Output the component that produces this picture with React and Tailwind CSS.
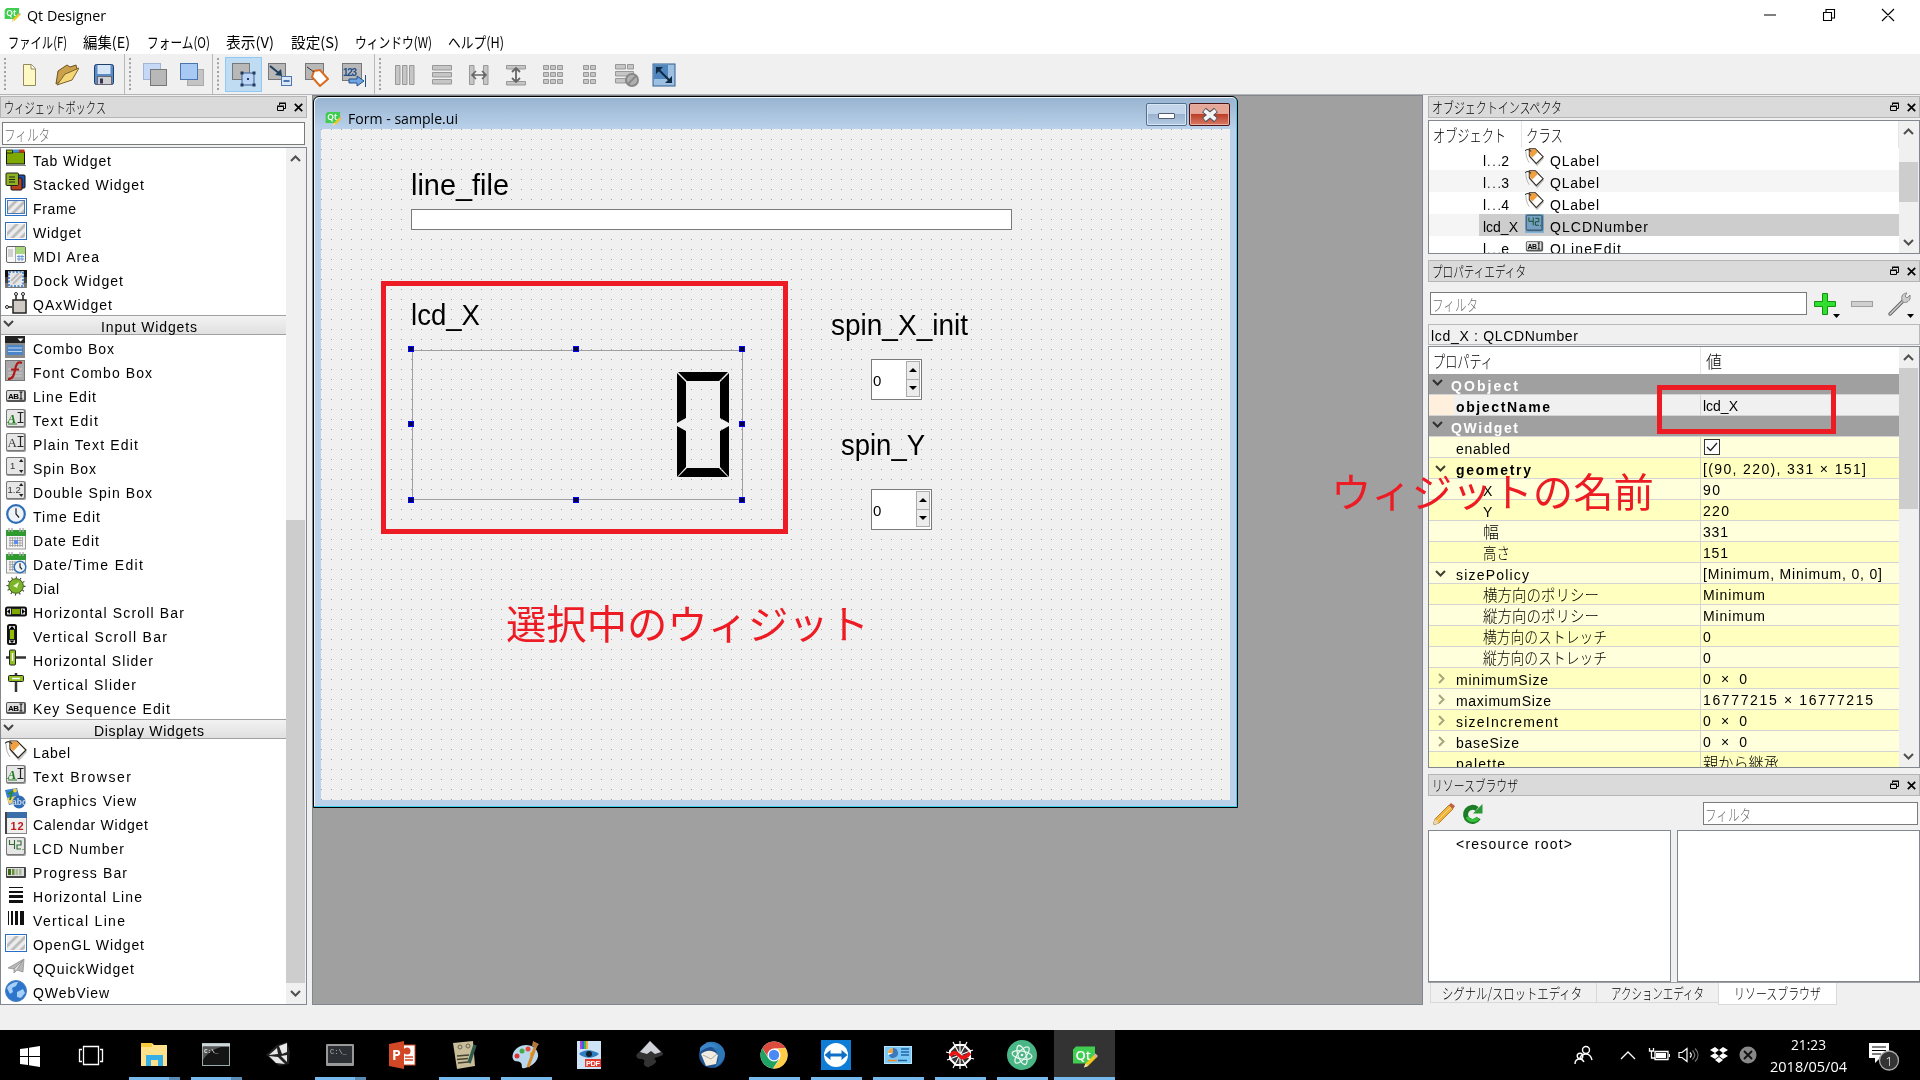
import React, { useLayoutEffect, useRef, useState } from "react";

const UI = "font-['Noto_Sans_CJK_JP',sans-serif]";

/* Text set to an exact advance width: by tracking, or by condensing the glyphs. */
function T({ w, squeeze, className = "", children }) {
  const ref = useRef(null);
  const [style, setStyle] = useState({});
  useLayoutEffect(() => {
    const natural = ref.current.getBoundingClientRect().width;
    if (!natural) return;
    setStyle(
      squeeze
        ? { transform: `scaleX(${w / natural})` }
        : { letterSpacing: `${(w - natural) / Math.max(1, String(children).length - 1)}px` }
    );
  }, []);
  return (
    <span
      className={
        "inline-block shrink-0 whitespace-pre " +
        (squeeze ? "" : "font-['Liberation_Sans','Noto_Sans_CJK_JP',sans-serif] ") +
        className
      }
      style={{ width: w }}
    >
      <span ref={ref} className="inline-block origin-left whitespace-pre" style={style}>
        {children}
      </span>
    </span>
  );
}

/* ---------- logos and shared glyphs ---------- */

const QtLogo = ({ className }) => (
  <svg viewBox="0 0 26 22" className={className}>
    <path d="M4 1h19v12l-5 5H1V4z" fill="#41cd52" />
    <text x="3.500" y="14" fontSize="13" fontWeight="600" fill="#fff" fontFamily="Open Sans, sans-serif">Qt</text>
    <path d="M12 22l1.500-4 9-9 2.500 2.500-9 9z" fill="#f2c91d" />
    <path d="M21.500 10l2-2 2.500 2.500-2 2z" fill="#dcaaa0" />
    <path d="M12 22l1.500-4 2.500 2.500z" fill="#eee1c0" />
  </svg>
);

const FloatIcon = () => (
  <svg viewBox="0 0 9 10" className="h-[10px] w-[9px]" fill="none" stroke="#000">
    <path d="M2.500 3V1.500h6v5H7M2 1h7" />
    <path d="M.5 4.500h6v4h-6zM0 4h7" />
  </svg>
);
const XIcon = () => (
  <svg viewBox="0 0 9 9" className="h-[9px] w-[9px]" stroke="#000" strokeWidth="1.700">
    <path d="M.8 .8l7.400 7.400M8.200 .8L.8 8.200" />
  </svg>
);
const Chevron = ({ dir = "down", color = "#505050", className = "h-[7px] w-[11px]" }) => (
  <svg viewBox="0 0 11 7" className={className} fill="none" stroke={color} strokeWidth="2">
    <path d={dir === "down" ? "M1 1l4.500 4.500L10 1" : "M1 6l4.500-4.500L10 6"} />
  </svg>
);
const RightChevron = () => (
  <svg viewBox="0 0 7 11" className="ml-[-3px] h-[11px] w-[7px]" fill="none" stroke="#a6a67c" strokeWidth="2">
    <path d="M1 1l4.500 4.500L1 10" />
  </svg>
);

/* ---------- widget box icons (22 x 22) ---------- */

const hatch = (
  <>
    <rect x=".5" y="2.500" width="21" height="17" fill="#fff" stroke="#2b6fc4" />
    <rect x="2" y="4" width="18" height="14" fill="#ececec" />
    <path d="M2 12l8-8h4L2 16zM5 18L19 4h1v3L9 18zM14 18l6-6v4l-2 2z" fill="#bdbdbd" />
  </>
);
const key = (
  <>
    <rect x="1" y="1" width="20" height="19" rx="2" fill="#999" />
    <rect x="1.500" y="1.500" width="18" height="17" rx="1.500" fill="#e6e6e6" stroke="#777" />
  </>
);
const abi = (
  <>
    <rect x="1" y="6" width="20" height="12" rx="2" fill="#555" />
    <rect x="2" y="7" width="17" height="9" rx="1" fill="#ddd" />
    <text x="3" y="14.500" fontSize="8" fontWeight="bold" fontFamily="Liberation Sans, sans-serif" textLength="11">AB</text>
    <path d="M14.500 8h3M14.500 15h3M16 8v7" stroke="#000" fill="none" />
  </>
);
const cal = (
  <>
    <rect x="1.500" y="4" width="19" height="17" fill="#f4f4f4" stroke="#999" />
    <rect x="1" y="2" width="20" height="6" fill="#2f9a2f" />
    <path d="M4 0v4M7 0v4M15 0v4M18 0v4" stroke="#aaa" strokeWidth="1.400" />
    <path d="M4 10h14M4 12.500h14M4 15h14M4 17.500h14M5 9v10M7.500 9v10M10 9v10M12.500 9v10M15 9v10M17.500 9v10" stroke="#999" strokeWidth=".8" />
  </>
);
const tag = (
  <>
    <path d="M7 3h7l8 9-8 9-9-10z" fill="#555" opacity=".35" />
    <path d="M5 1h7l9 9-8 8-8-9z" fill="#fff" stroke="#2b2117" strokeWidth="1.200" />
    <path d="M5.500 1.500h6.300l3 3-6.300 6.500-3-3z" fill="#f0a040" />
    <path d="M0 3.500C2 1 5 1 7 4" stroke="#333" fill="none" strokeWidth="1.200" />
    <path d="M1 4c0 6 2 10 4 13" stroke="#999" fill="none" strokeWidth=".8" />
  </>
);
const lcd = (
  <>
    {key}
    <path d="M4.500 4v4.500h5M9.500 4v9M12 5h4v4h-4v4h4M18 13v1" stroke="#2c6b2c" fill="none" strokeWidth="1.100" />
  </>
);
const AI = ({ green }) => (
  <>
    {key}
    <text x="2.500" y="14.500" fontSize="13" fontStyle={green ? "italic" : "normal"} fill={green ? "#1f7a1f" : "#333"} fontWeight={green ? "bold" : "normal"} fontFamily="Liberation Serif, serif">A</text>
    <path d="M12.500 4.500h6M12.500 14.500h6M15.500 4.500v10" stroke="#222" strokeWidth="1.200" />
    {green && <path d="M3 16h9" stroke="#1f7a1f" />}
  </>
);
const clock = (cx, cy, r) => (
  <>
    <circle cx={cx} cy={cy} r={r} fill="#eef3f8" stroke="#2f6fb8" strokeWidth={r / 4} />
    <path d={`M${cx} ${cy - r * 0.65}V${cy}L${cx + r * 0.35} ${cy + r * 0.4}`} stroke="#222" fill="none" strokeWidth="1.200" />
  </>
);
const spin = (s) => (
  <>
    {key}
    <text x={s.length > 1 ? 2.500 : 5} y="13" fontSize="9.500" fill="#333" fontFamily="Liberation Sans, sans-serif">{s}</text>
    <path d="M14 6l2.200-3 2.200 3zM14 14l2.200 3 2.200-3z" fill="#222" />
  </>
);

const ICONS = {
  tab: (
    <>
      <rect x="1.500" y="4" width="18" height="12" fill="#7fa800" stroke="#111" />
      <rect x="1.500" y="2" width="6" height="3" fill="#8fbf00" stroke="#111" strokeWidth=".8" />
      <rect x="8" y="1.500" width="6" height="3" fill="#3c8fd8" />
      <rect x="14" y="1.500" width="5.500" height="3" fill="#c03018" />
      <path d="M1 17.500h20" stroke="#888" />
    </>
  ),
  stacked: (
    <>
      <rect x="10" y="3" width="10" height="13" rx="1" fill="#1a50b0" stroke="#111" />
      <rect x="6" y="6" width="11" height="12" rx="1" fill="#b8401c" stroke="#111" />
      <rect x="1" y="1" width="12.500" height="12.500" rx="1" fill="#8fb320" stroke="#222" />
      <path d="M4 5h6M4 7.500h6M4 10h6" stroke="#222" />
    </>
  ),
  frame: (
    <>
      {hatch}
      <rect x="2.500" y="4.500" width="17" height="13" fill="none" stroke="#4a7ab8" />
    </>
  ),
  widget: hatch,
  mdi: (
    <>
      <rect x="1.500" y="2.500" width="19" height="16" rx="1.500" fill="#f6f6f6" stroke="#666" />
      <rect x="11" y="3" width="9" height="7" fill="#a9d77e" />
      <path d="M10.500 3v15M3 6h5M3 8h5M3 10h5M3 12h5" stroke="#aaa" />
      <path d="M12 12.500h7M12 15h7M14 11v6M17 11v6" stroke="#6b9bd8" />
    </>
  ),
  dock: (
    <>
      <rect x="0" y="2" width="22" height="18" fill="#111" />
      <rect x="0" y="9" width="22" height="6" fill="#444" />
      <rect x="0" y="15" width="22" height="5" fill="#777" />
      <rect x="4" y="4" width="14" height="14" fill="#e6e6e6" stroke="#fff" strokeWidth="1.500" />
      <rect x="4" y="4" width="14" height="14" fill="none" stroke="#2b6fc4" strokeWidth="1.500" strokeDasharray="2 1.500" />
      <path d="M6 13l8-8M8 16l9-9" stroke="#bbb" strokeWidth="2" />
    </>
  ),
  ax: (
    <>
      <rect x="8" y="8" width="13" height="13" fill="#cfcbc4" stroke="#222" strokeWidth="1.500" />
      <path d="M11 8V3M18 8V3M7 15H3" stroke="#222" strokeWidth="1.500" />
      <circle cx="11" cy="2" r="1.500" fill="#fff" stroke="#222" />
      <circle cx="18" cy="2" r="1.500" fill="#fff" stroke="#222" />
      <circle cx="2" cy="15" r="1.500" fill="#fff" stroke="#222" />
    </>
  ),
  combo: (
    <>
      <rect x="0" y="0" width="20" height="22" fill="#8a8a8a" />
      <rect x="0" y="0" width="20" height="7" fill="#222" />
      <path d="M12.500 2.500h6l-3 3z" fill="#fff" />
      <rect x="2" y="9" width="16" height="10" fill="#4d86c8" />
      <path d="M3 12h14M3 15.500h14" stroke="#b9d4f0" />
    </>
  ),
  font: (
    <>
      <rect x=".5" y=".5" width="19" height="20" fill="#a8a8a8" stroke="#777" />
      <path d="M3 9h14M3 13h14M3 16h14" stroke="#ccc" />
      <path d="M17 3c-5-2-6 2-7 7s-2 9-7 9M6 9.500h8" stroke="#b01818" strokeWidth="2.200" fill="none" />
    </>
  ),
  line: abi,
  text: <AI green />,
  plain: <AI />,
  spin: spin("1"),
  dspin: spin("1.2"),
  time: clock(11, 10, 8.800),
  date: (
    <>
      {cal}
      <rect x="9" y="12" width="4" height="4" fill="#5b8def" />
    </>
  ),
  datetime: (
    <>
      {cal}
      {clock(15, 15, 5.800)}
    </>
  ),
  dial: (
    <>
      <circle cx="11" cy="10" r="8.500" fill="none" stroke="#333" strokeWidth="2" strokeDasharray="1 3.400" />
      <circle cx="11" cy="10" r="7.300" fill="#7db52a" stroke="#3c5c10" />
      <path d="M8 10l6-4-2 6-1.500-1z" fill="#eef6dc" />
    </>
  ),
  hscroll: (
    <>
      <rect x="1" y="7.500" width="20" height="8" rx="1.500" fill="#ddd" stroke="#111" strokeWidth="2" />
      <rect x="6.500" y="8.500" width="9" height="6" fill="#7da800" stroke="#222" />
      <path d="M5 9v5l-3-2.500zM17 9v5l3-2.500z" fill="#000" />
    </>
  ),
  vscroll: (
    <>
      <rect x="3" y="1" width="8" height="19" rx="1.500" fill="#ddd" stroke="#111" strokeWidth="2" />
      <rect x="4.500" y="5.500" width="5" height="10" fill="#8fbf00" stroke="#222" />
      <path d="M4.500 5L7 2l2.500 3zM4.500 16.500L7 19l2.500-2.500z" fill="#000" />
    </>
  ),
  hslider: (
    <>
      <path d="M1 9.500h20" stroke="#333" strokeWidth="2.500" />
      <rect x="4.500" y="2" width="6" height="15" rx="1" fill="#8fbf20" stroke="#222" />
      <path d="M7.500 5v8" stroke="#fff" strokeWidth="1.500" />
    </>
  ),
  vslider: (
    <>
      <path d="M11 1v19" stroke="#333" strokeWidth="2.500" />
      <rect x="3.500" y="3.500" width="15" height="6" rx="1" fill="#8fbf20" stroke="#222" />
      <path d="M7 6.500h8" stroke="#fff" strokeWidth="1.500" />
    </>
  ),
  label: tag,
  graphics: (
    <>
      <path d="M0 2l12-2 4 14-12 3z" fill="#3b7fd0" />
      <path d="M2 10l9-2 2 6-9 2z" fill="#f0d070" />
      <path d="M5 12l2-8 3-1M7 4L3 6" stroke="#2a8a2a" strokeWidth="1.800" fill="none" />
      <circle cx="10" cy="2.500" r="2" fill="#f4d030" />
      <circle cx="14" cy="14" r="6.500" fill="#2d6cb5" />
      <text x="7" y="17" fontSize="8.500" fontWeight="bold" fill="#c8d6e6" fontFamily="Liberation Sans, sans-serif">abc</text>
    </>
  ),
  calendar: (
    <>
      <rect x=".5" y=".5" width="21" height="21" fill="#eee" stroke="#888" />
      <path d="M0 0h22v6H0z" fill="#3a6ea8" />
      <path d="M1 0v22" stroke="#444" strokeWidth="2" />
      <text x="5.500" y="18" fontSize="11" fontWeight="bold" fill="#c01818" fontFamily="Liberation Sans, sans-serif" textLength="13">12</text>
    </>
  ),
  lcd,
  progress: (
    <>
      <rect x="1" y="7" width="20" height="11" rx="1" fill="#444" />
      <rect x="2" y="8" width="17" height="8" fill="#ddd" />
      <path d="M3 9h3v6H3z" fill="#3c6c10" />
      <path d="M7 9h2.500v6H7z" fill="#6a8c40" />
      <path d="M10.500 9H13v6h-2.500zM14 9h2.500v6H14z" fill="#a8b898" />
    </>
  ),
  hline: <path d="M4 3h14v1H4zM4 7h14v2H4zM4 11h14v3H4zM4 16h14v3H4z" fill="#111" />,
  vline: <path d="M3 3h1v14H3zM6 3h2v14H6zM10 3h3v14h-3zM15 3h4v14h-4z" fill="#111" />,
  quick: (
    <>
      <path d="M3 12L19 3l-1 13-6-2-3 3v-4z" fill="#b8b8b8" stroke="#888" strokeWidth=".7" />
      <path d="M9 13l9-9-6 10" fill="#ddd" stroke="#888" strokeWidth=".7" />
    </>
  ),
  web: (
    <>
      <circle cx="11" cy="11" r="10.500" fill="#2d74cc" stroke="#4c80bc" />
      <path d="M2 8c3-5 8-6 11-6l-2 4-4 2 1 4-3 2zM12 12l6-3 2 4-4 5-4-1z" fill="#a6d0f7" />
    </>
  ),
};

const GROUPS = [
  {
    items: [
      ["tab", "Tab Widget", 78],
      ["stacked", "Stacked Widget", 111],
      ["frame", "Frame", 43],
      ["widget", "Widget", 48],
      ["mdi", "MDI Area", 66],
      ["dock", "Dock Widget", 90],
      ["ax", "QAxWidget", 79],
    ],
  },
  {
    title: ["Input Widgets", 96],
    items: [
      ["combo", "Combo Box", 81],
      ["font", "Font Combo Box", 119],
      ["line", "Line Edit", 63],
      ["text", "Text Edit", 65],
      ["plain", "Plain Text Edit", 105],
      ["spin", "Spin Box", 63],
      ["dspin", "Double Spin Box", 119],
      ["time", "Time Edit", 67],
      ["date", "Date Edit", 66],
      ["datetime", "Date/Time Edit", 110],
      ["dial", "Dial", 26],
      ["hscroll", "Horizontal Scroll Bar", 151],
      ["vscroll", "Vertical Scroll Bar", 134],
      ["hslider", "Horizontal Slider", 120],
      ["vslider", "Vertical Slider", 103],
      ["line", "Key Sequence Edit", 137],
    ],
  },
  {
    title: ["Display Widgets", 110],
    items: [
      ["label", "Label", 37],
      ["text", "Text Browser", 98],
      ["graphics", "Graphics View", 103],
      ["calendar", "Calendar Widget", 115],
      ["lcd", "LCD Number", 91],
      ["progress", "Progress Bar", 94],
      ["hline", "Horizontal Line", 109],
      ["vline", "Vertical Line", 92],
      ["widget", "OpenGL Widget", 111],
      ["quick", "QQuickWidget", 101],
      ["web", "QWebView", 76],
    ],
  },
];

function DockTitle({ text, w }) {
  return (
    <div className="flex h-[22px] shrink-0 items-center border border-[#b4b4b4] bg-[#dadada] pl-[3px] pr-[3px]">
      <T w={w} squeeze className="text-[15px] leading-[20px]">{text}</T>
      <div className="ml-auto flex items-center gap-[8px]">
        <FloatIcon />
        <XIcon />
      </div>
    </div>
  );
}

function Filter({ className }) {
  return (
    <div className={"flex h-[23px] items-center border border-[#7a7a7a] bg-white pl-px text-[#707070] " + className}>
      <T w={46} squeeze className="text-[16px] leading-[20px]">フィルタ</T>
    </div>
  );
}

function ScrollBar({ before, thumb, className = "w-[20px]" }) {
  return (
    <div className={"flex shrink-0 flex-col items-center bg-[#f0f0f0] pr-px " + className}>
      <div className="flex h-[21px] shrink-0 items-center"><Chevron dir="up" /></div>
      <div className="w-full shrink-0" style={{ height: before }} />
      <div className="w-full shrink-0 bg-[#cdcdcd]" style={{ height: thumb }} />
      <div className="mt-auto flex h-[21px] shrink-0 items-center"><Chevron /></div>
    </div>
  );
}

/* ---------- toolbar ---------- */

const Sep = () => <div className="h-[40px] w-px shrink-0 bg-[#b8b8b8]" />;
const Grip = ({ className = "" }) => (
  <svg viewBox="0 0 2 32" className={"h-[32px] w-[2px] shrink-0 " + className}>
    <path d="M1 0v32" stroke="#a0a0a0" strokeWidth="2" strokeDasharray="2 2.300" />
  </svg>
);
const TI = ({ className, children }) => (
  <svg viewBox="0 0 24 24" className={"mt-[2px] h-[24px] w-[24px] shrink-0 " + className}>{children}</svg>
);
const gray = { fill: "#c6c6c6", stroke: "#989898" };

function ToolBar() {
  return (
    <div className="flex h-[40px] items-center bg-[#f0f0f0]">
      <Grip className="ml-[4px]" />
      <TI className="ml-[12px]">
        <path d="M5.500 1.500h8l4 4v17h-12z" fill="#fdf8c4" stroke="#93895a" />
        <path d="M13 1.500v4.500h4.500" fill="#fff" stroke="#93895a" />
      </TI>
      <TI className="ml-[13px]">
        <path d="M1 21L3 8l9-6 3 2 6-2 1 4-6 5z" fill="#caa14a" stroke="#6b5222" />
        <path d="M2 22L10 11l5-2 9-4-7 12z" fill="#f4d778" stroke="#7d6128" />
      </TI>
      <TI className="ml-[14px]">
        <rect x="1.500" y="1.500" width="19" height="20" rx="2" fill="#5b8bc4" stroke="#20406c" />
        <rect x="4.500" y="2" width="13" height="9" fill="#d6e6f7" />
        <rect x="4.500" y="13.500" width="14" height="8" fill="#d0d0d0" stroke="#667" />
        <rect x="7" y="15.500" width="3" height="5" fill="#335" />
      </TI>
      <div className="ml-[7px]"><Sep /></div>
      <Grip className="ml-[4px]" />
      <TI className="ml-[12px]">
        <rect x=".5" y=".5" width="17" height="16" fill="#c5d8f5" stroke="#a3b5d4" />
        <rect x="7.500" y="6.500" width="16" height="16" fill="#b8b8b8" stroke="#777" />
      </TI>
      <TI className="ml-[13px]">
        <rect x="7.500" y="6.500" width="16" height="16" fill="#c4c4c4" stroke="#aaa" />
        <rect x=".5" y=".5" width="17" height="16" fill="#a9c9f5" stroke="#4a75ae" />
      </TI>
      <div className="ml-[8px]"><Sep /></div>
      <Grip className="ml-[4px]" />
      <div className="ml-[6px] flex h-[35px] w-[37px] items-center justify-center border border-[#90c8f6] bg-[#c0dcf3]">
        <TI className="">
          <rect x=".5" y=".5" width="17" height="16" fill="#b8b8b8" stroke="#777" />
          <rect x="10" y="10" width="12" height="12" fill="#bcd5f6" stroke="#385f90" />
          <path d="M8.500 8.500h3v3h-3zM20.500 8.500h3v3h-3zM8.500 20.500h3v3h-3zM20.500 20.500h3v3h-3zM15 15h2v2h-2z" fill="#203a5c" />
        </TI>
      </div>
      <TI className="ml-[6px]">
        <rect x=".5" y=".5" width="17" height="16" fill="#b8b8b8" stroke="#777" />
        <rect x="13.500" y="13.500" width="10" height="9" fill="#dbe8fa" stroke="#4a75ae" />
        <path d="M15.500 18h6" stroke="#4a75ae" strokeWidth="2" />
        <path d="M2 3l10 8" stroke="#1f3f5f" strokeWidth="2" />
        <path d="M14 13l-7-1 6-6z" fill="#1f3f5f" />
      </TI>
      <TI className="ml-[13px]">
        <rect x=".5" y=".5" width="18" height="16" fill="#b8b8b8" stroke="#777" />
        <path d="M9 8l6-1 8 9-8 7-8-9z" fill="#fff" stroke="#d96a1e" strokeWidth="2" />
        <path d="M2 4l7 5" stroke="#333" />
      </TI>
      <TI className="ml-[13px]">
        <rect x=".5" y=".5" width="19" height="17" fill="#b8b8b8" stroke="#777" />
        <text x="1" y="13" fontSize="10" fontWeight="bold" fill="#24508a" fontFamily="Liberation Sans, sans-serif" textLength="14">123</text>
        <path d="M7 16h8v-3l7 5-7 5v-3H7z" fill="#6fa4e4" stroke="#24508a" />
        <path d="M23.500 12v12" stroke="#24508a" />
      </TI>
      <div className="ml-[8px]"><Sep /></div>
      <Grip className="ml-[4px]" />
      <TI className="ml-[12px]">
        <path d="M2.500 2.500h4.500v19H2.500zM9.500 2.500H14v19H9.500zM16.500 2.500H21v19h-4.500z" {...gray} />
      </TI>
      <TI className="ml-[13px]">
        <path d="M2.500 2.500h19V7h-19zM2.500 9.500h19V14h-19zM2.500 16.500h19V21h-19z" {...gray} />
      </TI>
      <TI className="ml-[13px]">
        <path d="M2.500 2.500h4.500v19H2.500zM16.500 2.500H21v19h-4.500z" {...gray} />
        <path d="M5 12h14M9 8l-4 4 4 4M15 8l4 4-4 4" stroke="#666" strokeWidth="1.600" fill="none" />
      </TI>
      <TI className="ml-[13px]">
        <path d="M2.500 2.500h19V6h-19zM2.500 18.500h19V22h-19z" {...gray} />
        <path d="M12 5v14M8 9l4-4 4 4M8 15l4 4 4-4" stroke="#666" strokeWidth="1.800" fill="none" />
      </TI>
      <TI className="ml-[13px]">
        <path d="M2.500 2.500h5v4h-5zM9.500 2.500h5v4h-5zM16.500 2.500h5v4h-5zM2.500 9.500h5v4h-5zM9.500 9.500h5v4h-5zM16.500 9.500h5v4h-5zM2.500 16.500h5v4h-5zM9.500 16.500h5v4h-5zM16.500 16.500h5v4h-5z" {...gray} />
      </TI>
      <TI className="ml-[13px]">
        <path d="M5.500 2.500h5v4h-5zM12.500 2.500h5v4h-5zM5.500 9.500h5v4h-5zM12.500 9.500h5v4h-5zM5.500 16.500h5v4h-5zM12.500 16.500h5v4h-5z" {...gray} />
      </TI>
      <TI className="ml-[13px]">
        <path d="M.5 1.500h10V6H.5zM12.500 1.500h6V6h-6zM.5 8.500h18V13H.5zM.5 15.500h10V20H.5z" {...gray} />
        <circle cx="17" cy="17" r="6" fill="#b0b0b0" stroke="#888" strokeWidth="2" />
        <path d="M13 21l8-8" stroke="#888" strokeWidth="2" />
      </TI>
      <TI className="ml-[13px]">
        <rect x="1" y="1" width="22" height="22" fill="#9dbfe2" stroke="#2f5f90" />
        <path d="M2 2h14v14H2z" fill="#4f86bd" />
        <path d="M6 6l12 12" stroke="#0e2a45" strokeWidth="2" />
        <path d="M4 4h7l-7 7zM20 20h-7l7-7z" fill="#0e2a45" />
      </TI>
    </div>
  );
}

/* ---------- form being edited ---------- */

function Spin({ className, w }) {
  return (
    <div className={"absolute flex h-[41px] border border-[#7a7a7a] bg-white " + className} style={{ width: w }}>
      <span className="mt-[11px] ml-[1px] font-['Liberation_Sans',sans-serif] text-[15px] leading-[20px]">0</span>
      <div className="ml-auto mr-px mt-px flex h-[36px] w-[14px] flex-col border border-[#ababab] bg-[#ececec]">
        <div className="flex flex-1 items-center justify-center border-b border-[#ababab]">
          <svg viewBox="0 0 8 4" className="h-[4px] w-[8px]"><path d="M0 4l4-4 4 4z" /></svg>
        </div>
        <div className="flex flex-1 items-center justify-center">
          <svg viewBox="0 0 8 4" className="h-[4px] w-[8px]"><path d="M0 0l4 4 4-4z" /></svg>
        </div>
      </div>
    </div>
  );
}

const Handle = ({ className }) => <div className={"absolute h-[6px] w-[6px] border border-[#0000ff] bg-[#000040] " + className} />;

function FormWindow() {
  return (
    <div className="flex h-[712px] w-[925px] flex-col rounded-t-[6px] border border-black bg-[#b9d1ea] shadow-[inset_-1px_-1px_0_#3fd0f0,inset_1px_1px_0_#eef5fc]">
      <div className="mx-px mt-px flex h-[31px] shrink-0 items-start rounded-t-[5px] bg-gradient-to-b from-[#99b4d1] to-[#b9d1ea] pl-[10px] pr-[6px]">
        <QtLogo className="mt-[13px] h-[15px] w-[17px]" />
        <T w={110} squeeze className="ml-[6px] mt-[10px] font-['Open_Sans',sans-serif] text-[15px] font-normal leading-[20px]">Form - sample.ui</T>
        <div className="ml-auto mt-[5px] flex h-[23px] w-[41px] items-center justify-center rounded-[2px] border border-[#56708f] bg-gradient-to-b from-[#c3d5ea] from-45% via-[#9ab3d0] via-50% to-[#b5cbe4] shadow-[inset_0_0_0_1px_#d9e6f4]">
          <div className="mt-[3px] h-[6px] w-[17px] rounded-[1px] border border-[#555b70] bg-white" />
        </div>
        <div className="ml-[2px] mt-[5px] flex h-[23px] w-[41px] items-center justify-center rounded-[2px] border border-[#4b1414] bg-gradient-to-b from-[#e5a898] from-45% via-[#bb3f28] via-50% to-[#d77a64] shadow-[inset_0_0_0_1px_#e8b0a4]">
          <svg viewBox="0 0 18 16" className="h-[16px] w-[18px]">
            <path d="M3 3l12 10M15 3L3 13" stroke="#50505c" strokeWidth="6" />
            <path d="M3.500 3.500l11 9M14.500 3.500l-11 9" stroke="#f4f4f4" strokeWidth="3.800" />
          </svg>
        </div>
      </div>
      <div className="relative ml-[7px] mr-[7px] h-[671px] bg-[#f0f0f0] bg-[radial-gradient(circle_at_0.5px_0.5px,#a0a0a0_0.7px,transparent_0.8px)] bg-[length:10px_10px] font-['Liberation_Sans',sans-serif] font-normal">
        <T w={98} squeeze className="absolute left-[90px] top-[36px] text-[30px] leading-[40px]">line_file</T>
        <div className="absolute left-[90px] top-[80px] h-[21px] w-[601px] border border-[#7a7a7a] bg-white" />
        <T w={69} squeeze className="absolute left-[90px] top-[166px] text-[30px] leading-[40px]">lcd_X</T>
        <T w={137} squeeze className="absolute left-[510px] top-[176px] text-[30px] leading-[40px]">spin_X_init</T>
        <T w={84} squeeze className="absolute left-[520px] top-[296px] text-[30px] leading-[40px]">spin_Y</T>
        <Spin className="left-[550px] top-[230px]" w={51} />
        <Spin className="left-[550px] top-[360px]" w={61} />
        <div className="absolute left-[91px] top-[221px] h-[150px] w-[331px] border border-[#a0a0a0]" />
        <svg viewBox="0 0 54 108" className="absolute left-[355px] top-[242px] h-[108px] w-[54px]">
          <path d="M2 1h50l-9 9H11zM1 2l9 9v36l-9 5zM53 2l-9 9v36l9 5zM1 55l9 5v36l-9 10zM53 55l-9 5v36l9 10zM2 106l9-9h32l9 9z" fill="#000" />
        </svg>
        <Handle className="left-[87px] top-[217px]" />
        <Handle className="left-[252px] top-[217px]" />
        <Handle className="left-[418px] top-[217px]" />
        <Handle className="left-[87px] top-[292px]" />
        <Handle className="left-[418px] top-[292px]" />
        <Handle className="left-[87px] top-[368px]" />
        <Handle className="left-[252px] top-[368px]" />
        <Handle className="left-[418px] top-[368px]" />
      </div>
    </div>
  );
}

/* ---------- right column ---------- */

const OBJECTS = [
  ["l⋯2", 26, tag, "QLabel", 49, "bg-white"],
  ["l⋯3", 26, tag, "QLabel", 49, "bg-[#f5f5f5]"],
  ["l⋯4", 26, tag, "QLabel", 49, "bg-white"],
  ["lcd_X", 35, lcd, "QLCDNumber", 98, "bg-[#cdcdcd]"],
  ["l⋯e", 26, abi, "QLineEdit", 71, "bg-white"],
];

const A = "bg-[#ffffdc]";
const B = "bg-[#ffffbf]";
const PROPS = [
  ["", 1, "enabled", 54, "check", 0, A],
  ["down", 1, "geometry", 75, "[(90, 220), 331 × 151]", 163, B],
  ["", 2, "X", 9, "90", 17, A],
  ["", 2, "Y", 9, "220", 26, B],
  ["", 2, "幅", 16, "331", 25, A],
  ["", 2, "高さ", 27, "151", 25, B],
  ["down", 1, "sizePolicy", 73, "[Minimum, Minimum, 0, 0]", 179, A],
  ["", 2, "横方向のポリシー", 116, "Minimum", 62, B],
  ["", 2, "縦方向のポリシー", 116, "Minimum", 62, A],
  ["", 2, "横方向のストレッチ", 124, "0", 8, B],
  ["", 2, "縦方向のストレッチ", 124, "0", 8, A],
  ["right", 1, "minimumSize", 92, "0 × 0", 44, B],
  ["right", 1, "maximumSize", 95, "16777215 × 16777215", 170, A],
  ["right", 1, "sizeIncrement", 102, "0 × 0", 44, B],
  ["right", 1, "baseSize", 63, "0 × 0", 44, A],
  ["", 1, "palette", 49, "親から継承", 76, B],
];
const cjk = (s) => /[\u3000-\u9fff]/.test(s);

function PropRow({ arrow, level, name, nw, value, vw, bg, bold }) {
  return (
    <div className={"flex h-[21px] shrink-0 items-center border-b border-[#d4d4d4] text-[14px] leading-[20px] " + bg}>
      <div className="flex h-full w-[272px] shrink-0 items-center border-r border-[#d4d4d4]">
        <div
          className={
            "flex shrink-0 items-center justify-center " +
            (level === 2 ? "w-[54px] pr-[26px]" : name === "objectName" ? "mr-[2px] h-full w-[25px] bg-[#ffefdc]" : "w-[27px]")
          }
        >
          {arrow === "down" && <Chevron className="ml-[-4px] h-[7px] w-[11px]" color="#404030" />}
          {arrow === "right" && <RightChevron />}
        </div>
        <T w={nw} squeeze={cjk(name)} className={(cjk(name) ? "text-[16px] " : "pt-[3px] ") + (bold ? "font-bold" : "")}>{name}</T>
      </div>
      {value === "check" ? (
        <div className="ml-[3px] flex h-[16px] w-[16px] items-center justify-center border border-[#333] bg-white">
          <svg viewBox="0 0 12 10" className="h-[10px] w-[12px]" fill="none" stroke="#222" strokeWidth="1.300"><path d="M1 5l3.500 3.500L11 1" /></svg>
        </div>
      ) : (
        <T w={vw} squeeze={cjk(value)} className={"ml-[2px] " + (cjk(value) ? "text-[16px]" : "pt-[2px]")}>{value}</T>
      )}
    </div>
  );
}

function GroupRow({ name, w }) {
  return (
    <div className="flex h-[21px] shrink-0 items-center border-b border-[#d4d4d4] bg-[#a0a0a0] pl-[3px] text-[14px] leading-[20px] text-white">
      <Chevron className="mb-[4px] h-[7px] w-[11px]" color="#303030" />
      <T w={w} className="ml-[8px] pt-[3px] font-bold">{name}</T>
    </div>
  );
}

function RightColumn() {
  return (
    <div className="ml-[5px] flex w-[492px] shrink-0 flex-col pt-[1px]">
      <DockTitle text="オブジェクトインスペクタ" w={130} />
      <div className="mt-[2px] flex h-[134px] shrink-0 overflow-hidden border border-[#828790] bg-white">
        <div className="flex w-[470px] shrink-0 flex-col overflow-hidden">
          <div className="flex h-[27px] shrink-0 items-center border-r border-[#e5e5e5] text-[17px] leading-[24px]">
            <div className="flex h-full w-[93px] items-center border-r border-[#e5e5e5] pl-[4px]"><T w={73} squeeze>オブジェクト</T></div>
            <T w={37} squeeze className="ml-[4px]">クラス</T>
          </div>
          {OBJECTS.map(([n, nw, ic, c, cw, bg], i) => (
            <div key={i} className={"flex h-[22px] shrink-0 items-center text-[14px] leading-[20px] " + (i === 3 ? "bg-[#f5f5f5]" : bg)}>
              <div className={"ml-[50px] flex h-full flex-1 items-center pl-[4px] " + bg}>
                <div className="w-[42px]"><T w={nw} className="pt-[4px]">{n}</T></div>
                <div className={"mb-[3px] h-[19px] w-[19px] " + (i === 3 ? "bg-[#7fb2d8]" : "")}>
                  <svg viewBox="0 0 22 22" className={"h-[19px] w-[19px] " + (i === 3 ? "mix-blend-multiply" : "")}>{ic}</svg>
                </div>
                <T w={cw} className="ml-[6px] pt-[4px]">{c}</T>
              </div>
            </div>
          ))}
        </div>
        <ScrollBar before={20} thumb={40} />
      </div>

      <div className="mt-[6px]"><DockTitle text="プロパティエディタ" w={94} /></div>
      <div className="mt-[10px] flex h-[23px] shrink-0 items-center pl-[2px]">
        <Filter className="w-[377px]" />
        <svg viewBox="0 0 30 28" className="ml-[6px] mt-[5px] h-[28px] w-[30px]">
          <path d="M9.500 1.500h5v8h8v5h-8v8h-5v-8h-8v-5h8z" fill="#2fe02f" stroke="#159015" />
          <path d="M20 22h7l-3.500 4z" />
        </svg>
        <div className="ml-[8px] h-[6px] w-[22px] border border-[#a0a0a0] bg-[#d0d0d0]" />
        <svg viewBox="0 0 30 28" className="ml-[14px] mt-[5px] h-[28px] w-[30px]">
          <path d="M3 22L16 9" stroke="#666" strokeWidth="3.500" strokeLinecap="round" />
          <path d="M3 22L16 9" stroke="#ccc" strokeWidth="1.500" strokeLinecap="round" />
          <path d="M20 1c-4 0-6 3-5 7s6 3 8-1V3l-3 3-2-2z" fill="#ccc" stroke="#888" />
          <path d="M20 22h7l-3.500 4z" />
        </svg>
      </div>
      <div className="mt-[9px] flex h-[21px] shrink-0 items-center border border-[#b9b9b9] pl-[2px] text-[14px] leading-[20px]">
        <T w={147} className="pt-[3px]">lcd_X : QLCDNumber</T>
      </div>
      <div className="mt-px flex h-[422px] shrink-0 overflow-hidden border border-[#828790] bg-white">
        <div className="flex w-[470px] shrink-0 flex-col overflow-hidden">
          <div className="flex h-[27px] shrink-0 items-center text-[17px] leading-[24px]">
            <div className="flex h-full w-[272px] items-center border-r border-[#e5e5e5] pl-[4px]"><T w={60} squeeze>プロパティ</T></div>
            <T w={16} squeeze className="ml-[5px]">値</T>
          </div>
          <GroupRow name="QObject" w={67} />
          <PropRow level={1} name="objectName" nw={94} value="lcd_X" vw={35} bg="bg-[#f0f0f0]" bold />
          <GroupRow name="QWidget" w={67} />
          {PROPS.map(([a, l, n, nw, v, vw, bg], i) => (
            <PropRow key={i} arrow={a} level={l} name={n} nw={nw} value={v} vw={vw} bg={bg} bold={n === "geometry"} />
          ))}
        </div>
        <ScrollBar before={0} thumb={141} />
      </div>

      <div className="mt-[6px]"><DockTitle text="リソースブラウザ" w={86} /></div>
      <div className="mt-[6px] flex h-[23px] shrink-0 items-center pl-[5px] pr-[2px]">
        <svg viewBox="0 0 22 22" className="h-[22px] w-[22px]">
          <path d="M0 22l2-6L16 2l4 4L6 20z" fill="#f2b33c" stroke="#a8701c" strokeWidth=".8" />
          <path d="M16 2l2-2 4 3-2 3z" fill="#c06048" />
          <path d="M0 22l2-6 4 4z" fill="#e8d8b0" />
          <path d="M4 18L18 4" stroke="#fbd98a" />
        </svg>
        <svg viewBox="0 0 22 22" className="ml-[7px] h-[22px] w-[22px]">
          <path d="M16.500 15A7 7 0 1 1 15 6" fill="none" stroke="#1c7d26" strokeWidth="5" />
          <path d="M16 15A6.500 6.500 0 0 1 5 14" fill="none" stroke="#35c03c" strokeWidth="3" />
          <path d="M20.500 1v9.500H11z" fill="#2b9a36" />
        </svg>
        <Filter className="ml-auto w-[215px]" />
      </div>
      <div className="mt-[5px] flex h-[152px] shrink-0 gap-[6px]">
        <div className="w-[243px] border border-[#828790] bg-white pl-[27px] pt-[2px] text-[14px] leading-[20px]">
          <T w={116}>{"<resource root>"}</T>
        </div>
        <div className="w-[243px] border border-[#828790] bg-white" />
      </div>
      <div className="flex h-[23px] shrink-0 items-start border-t border-[#a0a0a0] pl-[2px] text-[15px] leading-[20px]">
        <div className="flex h-[20px] w-[167px] border border-t-0 border-[#d9d9d9] pl-[11px]"><T w={140} squeeze>シグナル/スロットエディタ</T></div>
        <div className="flex h-[20px] w-[121px] border-b border-[#d9d9d9] pl-[14px]"><T w={93} squeeze>アクションエディタ</T></div>
        <div className="flex h-[22px] w-[119px] border border-t-0 border-[#d9d9d9] bg-white pl-[15px]"><T w={87} squeeze>リソースブラウザ</T></div>
      </div>
    </div>
  );
}

/* ---------- taskbar ---------- */

const TASKS = [
  ["", <path d="M5 9l8-1v8H5zM14 7.800L25 6v10H14zM5 17h8v8l-8-1zM14 17h11v10l-11-1.700z" fill="#fff" />],
  ["", <path d="M6.500 6.500h15v18h-15zM5 9.500H2.500v12H5M23 9.500h2.500v12H23" fill="none" stroke="#fff" strokeWidth="1.300" />],
  ["split", <g><path d="M2 3h11l2 2h13v21H2z" fill="#ffe18c" /><path d="M2 3h11v4H2z" fill="#f8c93a" /><path d="M7 26V15h17v11h-5v-6h-7v6z" fill="#38aee6" /></g>],
  ["split", <g><rect x="1.500" y="3.500" width="27" height="22" fill="#151515" stroke="#9aa" /><path d="M1 5h28" stroke="#cfd6da" strokeWidth="3" /><path d="M2 7h18C10 10 5 15 2 20z" fill="#555" /><text x="3" y="13" fontSize="6" fontWeight="bold" fill="#eee" fontFamily="Liberation Mono, monospace">C:\_</text></g>],
  ["", <g><path d="M3 15L14 5l10-3 3 10-1 12-10 2z" fill="#222" /><path d="M6 15l8-7 1 6zM16 6l8-3v9l-5 2zM6 16l9 1 7 7-9-1zM18 16l6-1v7z" fill="#e8e8e8" /></g>],
  ["split", <g><rect x="1" y="4" width="28" height="22" rx="1" fill="#999" /><rect x="3" y="6" width="24" height="17" fill="#2c3034" /><text x="5" y="14" fontSize="7" fill="#bbb" fontFamily="Liberation Mono, monospace">C:\_</text></g>],
  ["", <g><rect x="14" y="5" width="14" height="20" fill="#fff" stroke="#d24726" /><path d="M18 17h8M18 20h8" stroke="#d24726" strokeWidth="1.500" /><circle cx="20" cy="11" r="3.500" fill="#d24726" /><path d="M2 4l15-3v28L2 26z" fill="#d24726" /><text x="5" y="20" fontSize="14" fontWeight="bold" fill="#fff" fontFamily="Open Sans, sans-serif">P</text></g>],
  ["full", <g><path d="M4 3l20-2 2 25-18 3z" fill="#c9bc98" /><circle cx="11" cy="7" r="2" fill="none" stroke="#665" /><circle cx="19" cy="6" r="2" fill="none" stroke="#665" /><path d="M8 16l12-1M8 19.500l11-1M9 23l10-1" stroke="#443" strokeWidth="1.500" /><path d="M26 5L20 23" stroke="#2d5a4c" strokeWidth="3.500" /></g>],
  ["full", <g><path d="M15 5C4 5 0 15 2 19s6 1 8 4-1 6 4 5c9-2 14-9 13-14S22 5 15 5z" fill="#b9d8ee" /><circle cx="11" cy="11" r="2.500" fill="#4a4" /><circle cx="17" cy="9" r="2.500" fill="#e84a3a" /><circle cx="6" cy="16" r="2.500" fill="#d33" /><circle cx="21" cy="14" r="2.300" fill="#e8b020" /><path d="M25 5l-8 22" stroke="#d48a2e" strokeWidth="3" /><path d="M22 1l6 3-3 4-4-2z" fill="#b07840" /></g>],
  ["", <g><rect x="4" y="1" width="24" height="28" fill="#cfe3f6" /><path d="M7 1h2v8H7z" fill="#a4d" /><path d="M9 1h2v8H9z" fill="#36d" /><path d="M11 1h2v8h-2z" fill="#4b4" /><path d="M13 1h2v8h-2z" fill="#ea4" /><path d="M6 14c5-5 13-5 20 0-6 5-14 5-20 0z" fill="#2f7fc0" /><circle cx="16" cy="14" r="3" fill="#123" /><rect x="12" y="19" width="16" height="8" fill="#e23a2e" /><text x="13" y="26" fontSize="7.500" fontWeight="bold" fill="#fff" fontFamily="Liberation Sans, sans-serif" textLength="14">PDF</text></g>],
  ["", <g><path d="M15 1l13 12c1 3-6 4-8 5s2 2 1 4-5 4-7 5-6-2-5-4 0-4-3-4-6-2-4-5z" fill="#333" /><path d="M15 1l11 11-6 2-4-3-4 3-7-2z" fill="#cfd2d8" /></g>],
  ["", <g><circle cx="15" cy="15" r="13" fill="#1f4f8c" /><path d="M4 14c4-4 12-5 17 1l-2 9-10 2z" fill="#f0ece0" /><path d="M6 15l8 4 6-5" stroke="#aaa" fill="none" /><path d="M8 3c10-4 19 2 20 11-1 7-5 11-11 14 7-9 7-17-9-25z" fill="#2f78b8" /><path d="M3 8c5-7 14-6 18 0-6-2-12-1-18 4z" fill="#3b86c8" /></g>],
  ["full", <g><circle cx="15" cy="15" r="13.500" fill="#fff" /><path d="M3.300 8.300A13.500 13.500 0 0 1 26.700 8.300L15 8.500l-5.500 9z" fill="#dd4b3e" /><path d="M3.300 8.300A13.500 13.500 0 0 0 14 28.500L20.500 18.500H9.500z" fill="#1ea362" /><path d="M26.700 8.300A13.500 13.500 0 0 1 14 28.500L21 18.500 19 8.400z" fill="#ffcd46" /><circle cx="15" cy="15" r="6.500" fill="#fff" /><circle cx="15" cy="15" r="5.200" fill="#4a8af4" /></g>],
  ["full", <g><rect width="30" height="30" fill="#0f7dd6" /><circle cx="15" cy="15" r="12" fill="#fff" /><path d="M3.500 15l6-5v3.500h11V10l6 5-6 5v-3.500h-11V20z" fill="#0f6fc4" /></g>],
  ["full", <g><rect x="1.500" y="6.500" width="27" height="17" fill="#7cc8f4" stroke="#b8e4fb" /><circle cx="10" cy="13" r="5" fill="#fff" /><path d="M10 13V8a5 5 0 1 1-4.500 7z" fill="#3b78c0" /><path d="M10 13V8a5 5 0 0 0-5 5z" fill="#f4a23a" /><path d="M18 9h8M18 12h8M18 15h8" stroke="#1c66a8" strokeWidth="1.500" /><path d="M5 20.500h9" stroke="#f08a20" strokeWidth="1.500" /><path d="M15 20.500h9" stroke="#1c66a8" strokeWidth="1.500" /></g>],
  ["full", <g fill="none" stroke="#fff" strokeWidth="1.200"><path d="M11 5h8l6 6v8l-6 6h-8l-6-6v-8z" strokeWidth="2" fill="#333" /><path d="M15 1v28M1 12l28 7M2 20l26-10M8 2l14 26M22 2L8 28" /><path d="M5 16c5-7 8-1 11 1s6-1 9-4" stroke="#e11" strokeWidth="3.500" /></g>],
  ["full", <g><circle cx="15" cy="15" r="15" fill="#4ab585" /><g fill="none" stroke="#e6f6ee" strokeWidth="1.300"><ellipse cx="15" cy="15" rx="4" ry="10" transform="rotate(-20 15 15)" /><ellipse cx="15" cy="15" rx="4" ry="10" transform="rotate(40 15 15)" /><ellipse cx="15" cy="15" rx="4" ry="10" transform="rotate(100 15 15)" /></g><circle cx="15" cy="15" r="1.300" fill="#fff" /></g>],
];

function Taskbar() {
  return (
    <div className="flex h-[50px] shrink-0 bg-black text-white">
      {TASKS.map(([state, icon], i) => (
        <div key={i} className={"flex h-full w-[62px] shrink-0 flex-col items-center justify-between" + (i === 0 ? " ml-[-1px]" : "")}>
          <svg viewBox="0 0 30 30" className="mt-[10px] h-[30px] w-[30px]">{icon}</svg>
          {state && (
            <div className="flex h-[3px] w-[51px]">
              <div className="flex-1 bg-[#76b9ed]" />
              {state === "split" && <div className="w-[11px] bg-[#5a8bb5]" />}
            </div>
          )}
        </div>
      ))}
      <div className="ml-[1px] flex h-full w-[61px] flex-col items-center justify-between bg-[#333]">
        <QtLogo className="mt-[15px] h-[23px] w-[26px]" />
        <div className="h-[3px] w-full bg-[#76b9ed]" />
      </div>
      <div className="ml-auto flex items-center">
        <svg viewBox="0 0 22 22" className="h-[22px] w-[22px]" fill="none" stroke="#fff" strokeWidth="1.400">
          <circle cx="14" cy="6" r="3.500" /><path d="M8 14c1-3 3-4 6-4 3 0 5 2 6 6" /><circle cx="8" cy="12" r="2.800" /><path d="M3 20c0-3 2-5 5-5 2 0 3 1 4 3" />
        </svg>
        <svg viewBox="0 0 16 10" className="ml-[26px] h-[10px] w-[16px]" fill="none" stroke="#fff" strokeWidth="1.300"><path d="M1 9l7-7 7 7" /></svg>
        <svg viewBox="0 0 22 16" className="ml-[12px] h-[16px] w-[22px]">
          <path d="M7 4.500h13v8H7z" fill="none" stroke="#fff" strokeWidth="1.300" /><path d="M8 6h10v5H8zM21 7h1v3h-1z" fill="#fff" /><path d="M1.500 1v3h4V1M3.500 4v7h4" stroke="#fff" fill="none" strokeWidth="1.300" />
        </svg>
        <svg viewBox="0 0 22 18" className="ml-[8px] h-[18px] w-[22px]" fill="none" stroke="#fff" strokeWidth="1.200">
          <path d="M1 6.500h3l5-4v13l-5-4H1z" /><path d="M12 6.500c1.500 1.500 1.500 3.500 0 5" /><path d="M14.500 4.500c3 3 3 6 0 9M17 2.500c4 4 4 9 0 13" stroke="#777" />
        </svg>
        <svg viewBox="0 0 18 16" className="ml-[10px] h-[16px] w-[18px]" fill="#fff"><path d="M5 0l4 3-4 3-5-3zM13 0l5 3-5 3-4-3zM5 6l4 3-4 3-5-3zM13 6l5 3-5 3-4-3zM9 10l4 3-4 3-4-3z" /></svg>
        <svg viewBox="0 0 18 18" className="ml-[11px] h-[18px] w-[18px]"><circle cx="9" cy="9" r="8.500" fill="#888" /><path d="M5 5l8 8M13 5l-8 8" stroke="#111" strokeWidth="1.800" /></svg>
        <div className="ml-[12px] flex w-[78px] flex-col items-center font-['Open_Sans',sans-serif] text-[15px] font-normal leading-[22px]">
          <T w={35} squeeze>21:23</T>
          <T w={77} squeeze>2018/05/04</T>
        </div>
        <svg viewBox="0 0 34 32" className="ml-[20px] mr-[19px] h-[32px] w-[34px]">
          <path d="M2 4h20v15h-9l-5 5v-5H2z" fill="#fff" /><path d="M5 8h14M5 11.500h14M5 15h9" stroke="#000" strokeWidth="1.200" />
          <circle cx="22" cy="21.500" r="9.500" fill="#333" stroke="#aaa" strokeWidth="1.300" />
          <text x="18.500" y="26.500" fontSize="13" fill="#fff" fontFamily="Open Sans, sans-serif">1</text>
        </svg>
      </div>
    </div>
  );
}

const MENUS = [
  ["ファイル(F)", 59, "ml-[8px]"],
  ["編集(E)", 47, "ml-[16px]"],
  ["フォーム(O)", 63, "ml-[17px]"],
  ["表示(V)", 48, "ml-[16px]"],
  ["設定(S)", 48, "ml-[17px]"],
  ["ウィンドウ(W)", 77, "ml-[16px]"],
  ["ヘルプ(H)", 56, "ml-[16px]"],
];

export default function App() {
  return (
    <div className={"relative flex h-[1080px] w-[1920px] flex-col overflow-hidden bg-[#f0f0f0] font-light text-black " + UI}>
      <div className="flex h-[30px] shrink-0 items-center bg-white pb-px pl-[4px] pr-[25px]">
        <QtLogo className="h-[15px] w-[17px]" />
        <T w={79} squeeze className="ml-[6px] font-['Open_Sans',sans-serif] text-[15px] font-normal leading-[20px]">Qt Designer</T>
        <svg viewBox="0 0 132 14" className="ml-auto h-[14px] w-[132px]" fill="none" stroke="#000" strokeWidth="1.100">
          <path d="M1 7h12M60.500 4.500h8v8h-8zM63 4V1.500h8.500V10H69M119 1l12 12M131 1l-12 12" />
        </svg>
      </div>
      <div className="flex h-[24px] shrink-0 items-center bg-white font-normal">
        {MENUS.map(([t, w, m]) => (
          <T key={t} w={w} squeeze className={"text-[15px] leading-[24px] " + m}>{t}</T>
        ))}
      </div>
      <ToolBar />
      <div className="h-px shrink-0 bg-[#b4b4b4]" />

      <div className="flex h-[910px] shrink-0">
        <div className="flex w-[307px] shrink-0 flex-col pt-[1px]">
          <DockTitle text="ウィジェットボックス" w={102} />
          <Filter className="ml-[2px] mt-[4px] w-[303px] shrink-0" />
          <div className="mt-[2px] flex h-[858px] shrink-0 overflow-hidden border border-[#828790] bg-white">
            <div className="flex w-[285px] shrink-0 flex-col">
              {GROUPS.map((g, i) => (
                <React.Fragment key={i}>
                  {g.title && (
                    <div className="mb-px mt-[-1px] flex h-[20px] shrink-0 items-center border-y border-[#a0a0a0] bg-gradient-to-b from-[#f2f2f2] to-[#e0e0e0] pl-[2px] text-[14px] leading-[18px]">
                      <Chevron color="#444" className="mb-[3px] h-[7px] w-[11px]" />
                      <div className="flex flex-1 justify-center pr-[2px] pt-[3px]"><T w={g.title[1]}>{g.title[0]}</T></div>
                    </div>
                  )}
                  {g.items.map(([ic, t, w]) => (
                    <div key={t} className="flex h-[24px] shrink-0 items-center pl-[4px] text-[14px] leading-[20px]">
                      <svg viewBox="0 0 22 22" className="mb-[3px] h-[22px] w-[22px]">{ICONS[ic]}</svg>
                      <T w={w} className="ml-[6px] pt-[2px]">{t}</T>
                    </div>
                  ))}
                </React.Fragment>
              ))}
            </div>
            <ScrollBar before={351} thumb={463} />
          </div>
        </div>

        <div className="ml-[5px] h-[910px] w-[1111px] shrink-0 border border-[#828790] bg-[#a0a0a0]">
          <FormWindow />
        </div>

        <RightColumn />
      </div>

      <div className="h-[25px] shrink-0" />
      <Taskbar />

      {/* callouts */}
      <div className="absolute left-[381px] top-[281px] h-[253px] w-[407px] border-[5px] border-[#ed1c24]" />
      <div className="absolute left-[1657px] top-[385px] h-[49px] w-[179px] border-[5px] border-[#ed1c24]" />
      <T w={363} squeeze className="absolute left-[506px] top-[592px] text-[40px] font-normal leading-[60px] text-[#ed1c24]">選択中のウィジット</T>
      <T w={323} squeeze className="absolute left-[1331px] top-[460px] text-[40px] font-normal leading-[60px] text-[#ed1c24]">ウィジットの名前</T>
    </div>
  );
}
